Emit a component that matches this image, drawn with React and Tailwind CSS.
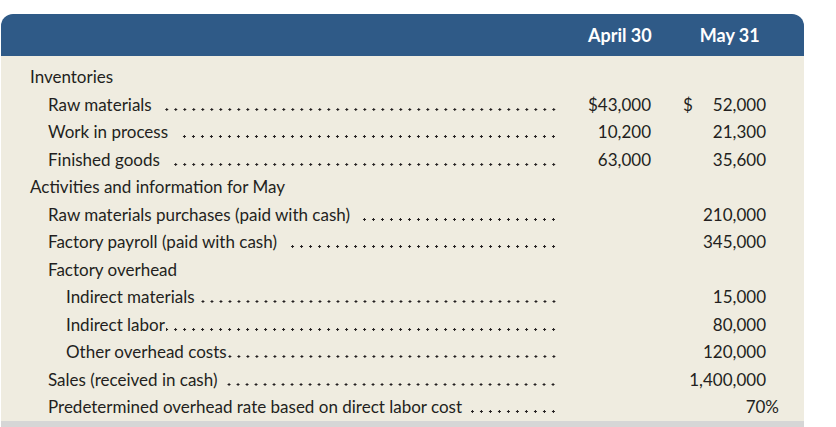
const rows = [
  { label: 'Inventories', indent: 0 },
  { label: 'Raw materials', indent: 1, dots: true, a: '$43,000', b: '52,000', dollar: true },
  { label: 'Work in process', indent: 1, dots: true, a: '10,200', b: '21,300' },
  { label: 'Finished goods', indent: 1, dots: true, a: '63,000', b: '35,600' },
  { label: 'Activities and information for May', indent: 0 },
  { label: 'Raw materials purchases (paid with cash)', indent: 1, dots: true, b: '210,000' },
  { label: 'Factory payroll (paid with cash)', indent: 1, dots: true, b: '345,000' },
  { label: 'Factory overhead', indent: 1 },
  { label: 'Indirect materials', indent: 2, dots: true, tight: true, b: '15,000' },
  { label: 'Indirect labor', indent: 2, dots: true, tight: true, b: '80,000' },
  { label: 'Other overhead costs', indent: 2, dots: true, tight: true, b: '120,000' },
  { label: 'Sales (received in cash)', indent: 1, dots: true, b: '1,400,000' },
  { label: 'Predetermined overhead rate based on direct labor cost', indent: 1, dots: true, b: '70%', pct: true },
]

const indents = ['pl-[29px]', 'pl-[47px]', 'pl-[65px]']

// dot leader drawn as a repeating background, lined up on the right
function Dots() {
  return (
    <div className="flex-1 h-[3px] mt-[10px] bg-[radial-gradient(circle,#231f20_1px,transparent_1.4px)] bg-[length:9px_3px] bg-repeat-x bg-right" />
  )
}

export default function App() {
  return (
    <div className="bg-white w-[836px] h-[427px] pt-[14px] pl-[1px] text-[#231f20] font-['Lato',sans-serif]">
      <div className="w-[803px]">
        {/* header */}
        <div className="h-[42px] bg-[#2f5a87] rounded-t-[12px] flex items-center text-white font-bold text-[18px]">
          <span className="ml-[587px]">April 30</span>
          <span className="ml-[48px]">May 31</span>
        </div>

        {/* body */}
        <div className="bg-[#efece0] pt-[7px] h-[365px] text-[17px]">
          {rows.map((r) => (
            <div key={r.label} className="h-[27.5px] flex items-center">
              <div className={`w-[557px] flex items-center ${indents[r.indent]}`}>
                <span className="whitespace-nowrap">{r.label}</span>
                {r.dots && <span className={r.tight ? 'w-[1px]' : 'w-[9px]'} />}
                {r.dots && <Dots />}
              </div>
              <div className="w-[93px] text-right">{r.a}</div>
              <div className="w-[115px] flex justify-between pl-[32px]">
                <span>{r.dollar ? '$' : ''}</span>
                <span className={r.pct ? '-mr-[13px]' : ''}>{r.b}</span>
              </div>
            </div>
          ))}
        </div>
        <div className="h-[6px] bg-[#d6d6d6]" />
      </div>
    </div>
  )
}
